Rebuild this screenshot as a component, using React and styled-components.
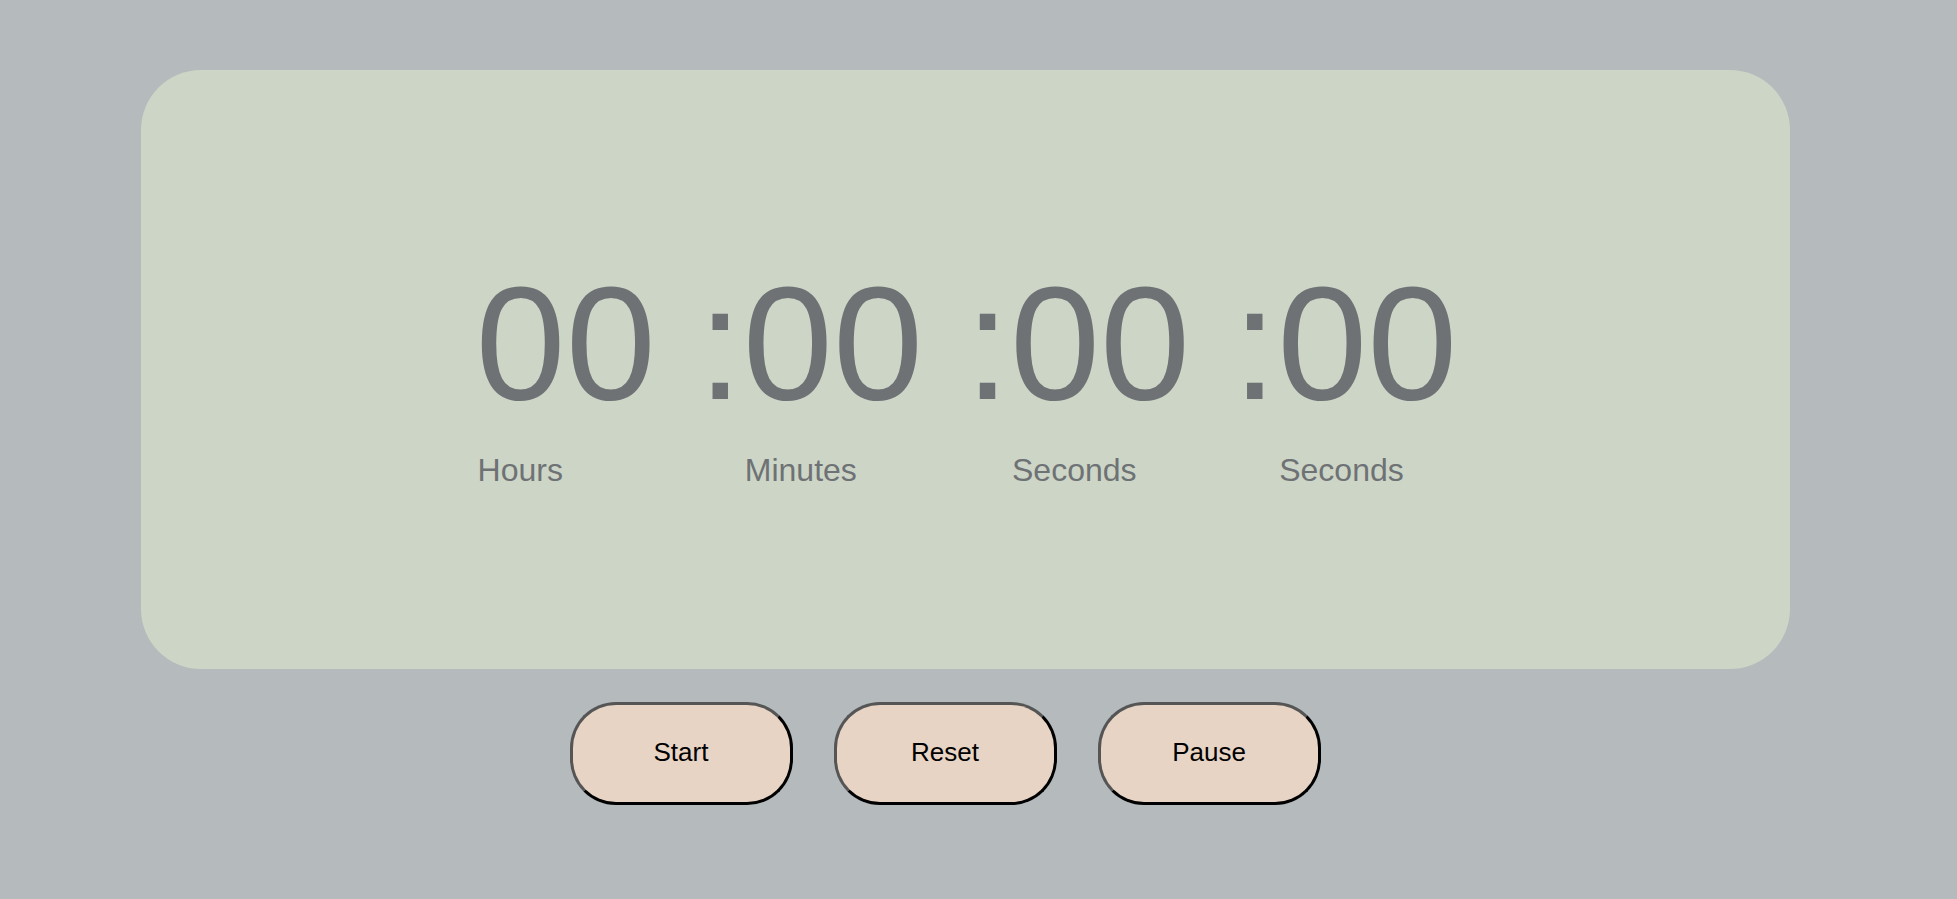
import React from 'react'
import styled, { createGlobalStyle } from 'styled-components'

const GlobalStyle = createGlobalStyle`
  html, body {
    margin: 0;
    padding: 0;
    background: #b5babd;
    font-family: "Liberation Sans", Arial, sans-serif;
  }
`

const Page = styled.main`
  display: flex;
  flex-direction: column;
  padding: 70px 167px 0 141px;
  min-height: 899px;
  box-sizing: border-box;
`

const Card = styled.section`
  display: flex;
  align-items: center;
  justify-content: center;
  height: 599px;
  padding-top: 8px;
  box-sizing: border-box;
  background: #cdd5c6;
  border-radius: 60px;
`

const Clock = styled.div`
  display: flex;
  align-items: flex-start;
  padding-left: 2px;
  color: #6e7275;
`

const Unit = styled.div`
  display: flex;
  flex-direction: column;
  gap: 30px;
`

const Digits = styled.span`
  font-size: 162px;
  line-height: 1;
`

const Separator = styled(Digits)`
  margin-left: 42px;
`

const Label = styled.span`
  font-size: 32px;
  line-height: 1;
  padding-left: 2px;
`

const Controls = styled.div`
  display: flex;
  justify-content: center;
  margin-top: 33px;
`

const Button = styled.button`
  width: 223px;
  height: 103px;
  margin-right: 41px;
  padding: 0 0 2px;
  border: 3px solid;
  border-color: #555555 #000000 #000000 #555555;
  border-radius: 46px;
  background: #e8d4c4;
  color: #000;
  font-family: "Liberation Sans", Arial, sans-serif;
  font-size: 26px;
  cursor: pointer;
`

const units = [
  { value: '00', label: 'Hours' },
  { value: '00', label: 'Minutes' },
  { value: '00', label: 'Seconds' },
  { value: '00', label: 'Seconds' },
]

export default function App() {
  return (
    <Page>
      <GlobalStyle />
      <Card>
        <Clock>
          {units.map((unit, i) => (
            <React.Fragment key={i}>
              {i > 0 && <Separator>:</Separator>}
              <Unit>
                <Digits>{unit.value}</Digits>
                <Label>{unit.label}</Label>
              </Unit>
            </React.Fragment>
          ))}
        </Clock>
      </Card>
      <Controls>
        <Button>Start</Button>
        <Button>Reset</Button>
        <Button>Pause</Button>
      </Controls>
    </Page>
  )
}
